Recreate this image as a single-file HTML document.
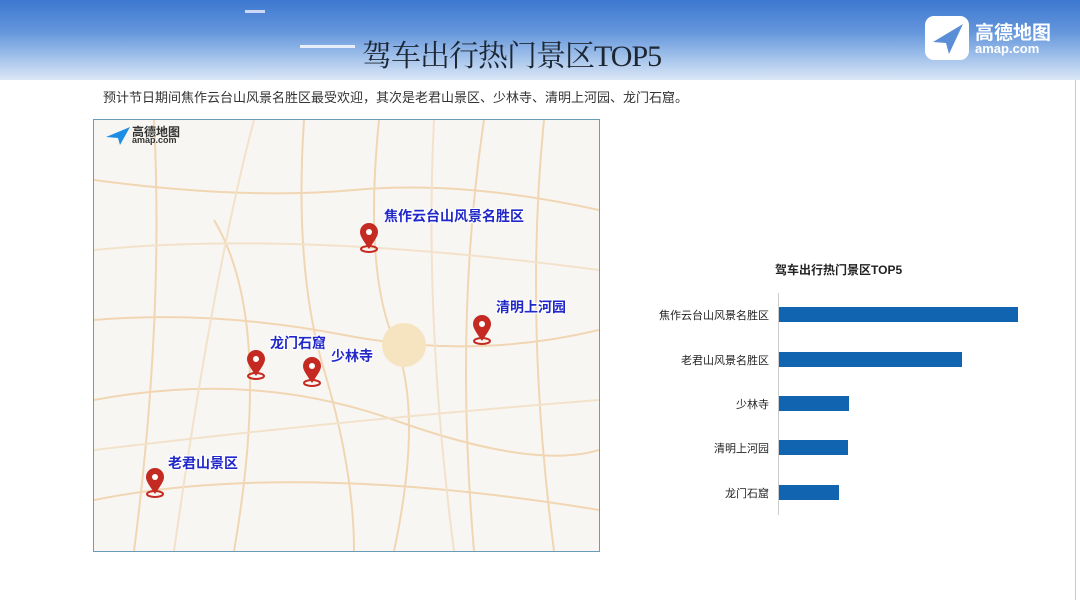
<!DOCTYPE html>
<html><head><meta charset="utf-8"><style>
body{margin:0;width:1080px;height:600px;background:#fff;position:relative;overflow:hidden;font-family:"Liberation Sans","Noto Sans CJK SC",sans-serif}
.hdr{position:absolute;left:0;top:0;width:1080px;height:80px;background:linear-gradient(180deg,#3d78cf 0%,#6496dc 40%,#a9c6ec 75%,#dbe7f6 100%)}
.title{position:absolute;left:362px;top:31px;font-family:"Liberation Serif","Noto Serif CJK SC",serif;font-size:30px;color:#1d2733;letter-spacing:-1px}
.sub{position:absolute;left:103px;top:87px;font-size:13px;color:#333}
.map{position:absolute;left:93px;top:119px;width:505px;height:431px;border:1px solid #6c9bb8;background:#f8f6f2;overflow:hidden}
.lbl{position:absolute;font-weight:bold;font-size:14px;color:#2228c8;text-shadow:-1px -1px 0 #fff,1px -1px 0 #fff,-1px 1px 0 #fff,1px 1px 0 #fff,0 0 3px #fff}
.pin{position:absolute;width:20px;height:30px}
.bar{position:absolute;left:779px;height:15px;background:#1064b0}
.bl{position:absolute;right:311px;font-size:11px;color:#222;width:150px;text-align:right}
</style></head><body>
<div class="hdr"></div>
<div style="position:absolute;left:245px;top:10px;width:20px;height:3px;background:#eef;opacity:.8"></div>
<div style="position:absolute;left:300px;top:45px;width:55px;height:3px;background:#fff;opacity:.8"></div>
<div class="title">驾车出行热门景区TOP5</div>
<div style="position:absolute;left:925px;top:16px;width:44px;height:44px;background:#fff;border-radius:9px"></div>
<svg style="position:absolute;left:925px;top:16px" width="44" height="44"><path d="M8 26 L38 8 L24 38 L21 27 Z" fill="#5a8fd8"/></svg>
<div style="position:absolute;left:975px;top:18px;color:#fff;font-size:19px;font-weight:bold">高德地图</div>
<div style="position:absolute;left:975px;top:41px;color:#fff;font-size:13px;font-weight:bold">amap.com</div>
<div style="position:absolute;left:1075px;top:80px;width:1px;height:520px;background:#ccc"></div>
<div class="sub">预计节日期间焦作云台山风景名胜区最受欢迎，其次是老君山景区、少林寺、清明上河园、龙门石窟。</div>
<div class="map">
<svg width="505" height="431" style="position:absolute;left:0;top:0" fill="none" stroke="#f1d6b3" stroke-width="2">
<path d="M0 60 Q150 80 260 70 T505 90"/><path d="M0 200 Q120 190 250 215 T505 210"/><path d="M0 280 Q160 250 300 300 T505 330"/>
<path d="M210 0 Q200 150 230 250 T260 431"/><path d="M285 0 Q270 150 300 220 T300 431"/><path d="M390 0 Q360 200 380 431"/><path d="M450 0 Q430 200 460 431"/>
<path d="M0 380 Q200 340 505 390"/><path d="M60 0 Q70 200 40 431"/><path d="M120 100 Q180 200 140 431"/>
<path d="M0 130 Q200 110 505 150" stroke="#f3e2cb"/><path d="M160 0 Q120 150 80 431" stroke="#f3e2cb"/><path d="M340 0 Q330 200 360 431" stroke="#f3e2cb"/><path d="M0 330 Q250 300 505 280" stroke="#f3e2cb"/>
<circle cx="310" cy="225" r="22" fill="#f6e3c0" stroke="none"/>
</svg>
<svg width="30" height="22" style="position:absolute;left:10px;top:5px"><path d="M2 12 L26 2 L16 20 L14 13 Z" fill="#1e8de6"/></svg>
<div style="position:absolute;left:38px;top:3px;font-size:12px;font-weight:bold;color:#333">高德地图</div>
<div style="position:absolute;left:38px;top:15px;font-size:9px;font-weight:bold;color:#333">amap.com</div>
<div class="lbl" style="left:290px;top:86px">焦作云台山风景名胜区</div>
<div class="lbl" style="left:402px;top:177px">清明上河园</div>
<div class="lbl" style="left:176px;top:213px">龙门石窟</div>
<div class="lbl" style="left:237px;top:226px">少林寺</div>
<div class="lbl" style="left:74px;top:333px">老君山景区</div>
<svg class="pin" style="left:265px;top:103px" viewBox="0 0 20 30"><ellipse cx="10" cy="26" rx="8" ry="3" fill="none" stroke="#c52a22" stroke-width="2"/><path d="M10 26 C4 17 1 13 1 9 A9 9 0 0 1 19 9 C19 13 16 17 10 26Z" fill="#c52a22"/><circle cx="10" cy="9" r="3" fill="#fff"/></svg>
<svg class="pin" style="left:378px;top:195px" viewBox="0 0 20 30"><ellipse cx="10" cy="26" rx="8" ry="3" fill="none" stroke="#c52a22" stroke-width="2"/><path d="M10 26 C4 17 1 13 1 9 A9 9 0 0 1 19 9 C19 13 16 17 10 26Z" fill="#c52a22"/><circle cx="10" cy="9" r="3" fill="#fff"/></svg>
<svg class="pin" style="left:152px;top:230px" viewBox="0 0 20 30"><ellipse cx="10" cy="26" rx="8" ry="3" fill="none" stroke="#c52a22" stroke-width="2"/><path d="M10 26 C4 17 1 13 1 9 A9 9 0 0 1 19 9 C19 13 16 17 10 26Z" fill="#c52a22"/><circle cx="10" cy="9" r="3" fill="#fff"/></svg>
<svg class="pin" style="left:208px;top:237px" viewBox="0 0 20 30"><ellipse cx="10" cy="26" rx="8" ry="3" fill="none" stroke="#c52a22" stroke-width="2"/><path d="M10 26 C4 17 1 13 1 9 A9 9 0 0 1 19 9 C19 13 16 17 10 26Z" fill="#c52a22"/><circle cx="10" cy="9" r="3" fill="#fff"/></svg>
<svg class="pin" style="left:51px;top:348px" viewBox="0 0 20 30"><ellipse cx="10" cy="26" rx="8" ry="3" fill="none" stroke="#c52a22" stroke-width="2"/><path d="M10 26 C4 17 1 13 1 9 A9 9 0 0 1 19 9 C19 13 16 17 10 26Z" fill="#c52a22"/><circle cx="10" cy="9" r="3" fill="#fff"/></svg>
</div>
<div style="position:absolute;left:775px;top:261px;font-size:12px;font-weight:bold;color:#222">驾车出行热门景区TOP5</div>
<div style="position:absolute;left:778px;top:293px;width:1px;height:222px;background:#ccc"></div>
<div class="bar" style="top:307px;width:239px"></div>
<div class="bar" style="top:352px;width:183px"></div>
<div class="bar" style="top:396px;width:70px"></div>
<div class="bar" style="top:440px;width:69px"></div>
<div class="bar" style="top:485px;width:60px"></div>
<div class="bl" style="top:307px">焦作云台山风景名胜区</div>
<div class="bl" style="top:352px">老君山风景名胜区</div>
<div class="bl" style="top:396px">少林寺</div>
<div class="bl" style="top:440px">清明上河园</div>
<div class="bl" style="top:485px">龙门石窟</div>
</body></html>
